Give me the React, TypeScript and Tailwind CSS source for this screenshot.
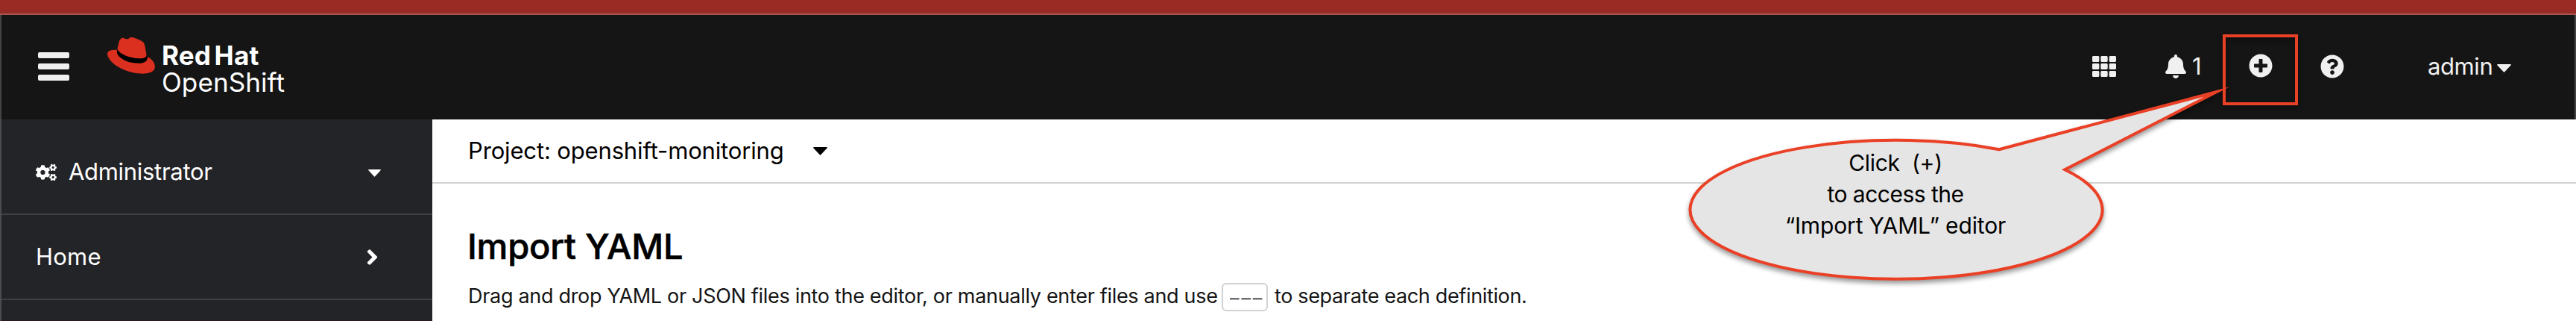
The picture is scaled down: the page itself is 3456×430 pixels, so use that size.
import { FaAngleRight, FaBell, FaCogs, FaPlusCircle, FaQuestionCircle, FaTh } from "react-icons/fa";

function Hat() {
  return (
    <svg className="block h-[49px] w-[64px]" viewBox="0 0 64 49">
      <path
        fill="#db2f20"
        d="M18.500 1.600C19.700.2 21.500.7 23.100 1.500c1.800.8 3.500 1 5 .7C29.500.6 31-.4 33.500 0c4.500 1 9 3 13.500 5.500 2.600 2 3.200 4.500 3.700 7.500l2.200 12.500c6 3 11 7.500 11 14 0 6-6.500 9.200-16.500 9.200C31 48.700 13 41 5 32 1 27.500-.7 23 .4 20.500 2 17.200 7.500 16.600 13 16.900L15.300 7.500c.6-2.500 1.700-4.500 3.200-5.900Z"
      />
      <path
        fill="#000"
        d="M14 15.500c-.9 1.200-1.400 2.600-1.200 4.300C13.500 26 24 34.500 41.500 34.800c6.500.1 11-2 12.200-5.800.5-2.100 0-4.200-1.300-5.600.6 3.200-3.200 5-9.400 4.900C29 28 17 22 14.500 17.500c-.3-.7-.4-1.300-.5-2Z"
      />
    </svg>
  );
}

function Caret({ className }: { className: string }) {
  return (
    <svg className={className} viewBox="0 0 19 11" preserveAspectRatio="none">
      <path fill="currentColor" d="M1 0h17q1.500 0 .5 1.500L10.500 10q-1 1.300-2 0L.5 1.500Q-.5 0 1 0Z" />
    </svg>
  );
}

function Masthead() {
  return (
    <header className="flex h-[140px] border-x-2 border-[#444446] bg-[#151515] text-[#f0f0f0]">
      <button className="mt-[50px] ml-[49px] flex h-[38px] w-[42px] flex-col justify-between">
        <span className="h-2 w-full rounded-[2px] bg-[#f0f0f0]" />
        <span className="h-2 w-full rounded-[2px] bg-[#f0f0f0]" />
        <span className="h-2 w-full rounded-[2px] bg-[#f0f0f0]" />
      </button>
      <div className="mt-[30px] ml-[51px] flex">
        <Hat />
        <div className="ml-[9px] pt-[6px] whitespace-nowrap text-white">
          <div className="text-[35px] leading-[36px] font-bold tracking-[0.2px] [word-spacing:-4px]">Red Hat</div>
          <div className="text-[35px] leading-[37px] tracking-[0.1px]">OpenShift</div>
        </div>
      </div>
      <div className="mr-[85px] ml-auto flex h-[137px] items-center">
        <FaTh className="mt-px mr-[66px] h-[32px] w-[32px]" />
        <FaBell className="mt-px mr-[8px] h-[32px] w-[28px]" />
        <span className="w-[76px] pt-[2px] text-[31px]">1</span>
        <FaPlusCircle className="mr-[64px] mb-px h-[32px] w-[32px]" />
        <FaQuestionCircle className="mt-px mr-[112px] h-[32px] w-[32px]" />
        <span className="w-[93px] pt-[2px] text-[31px] tracking-[-0.4px]">admin</span>
        <Caret className="mt-[6px] h-[11px] w-[19px]" />
      </div>
    </header>
  );
}

function Sidebar() {
  return (
    <nav className="flex w-[580px] shrink-0 flex-col border-l-2 border-[#4b4c4f] bg-[#232428] text-[31px] text-white">
      <div className="flex h-[128px] items-center border-b-2 border-[#3e4044] pr-[69px] pb-px pl-[46px]">
        <FaCogs className="mt-[16px] mr-[16px] h-[28px] w-[28px]" />
        <span className="mt-[16px] tracking-[-0.3px]">Administrator</span>
        <Caret className="mt-[18px] ml-auto h-[10px] w-[17px]" />
      </div>
      <div className="flex h-[114px] items-center border-b-2 border-[#3e4044] pr-[72px] pl-[46px]">
        <span className="tracking-[0.2px]">Home</span>
        <FaAngleRight className="ml-auto h-[33px] w-[17px]" />
      </div>
      <div className="flex-1 border-b border-[#2c1a20]" />
    </nav>
  );
}

function Content() {
  return (
    <main className="flex-1 bg-white">
      <div className="flex h-[86px] items-center border-b-2 border-[#d2d2d2] pl-[48px] text-[31px] text-black">
        <span className="w-[463px] tracking-[-0.15px]">Project: openshift-monitoring</span>
        <Caret className="h-[11px] w-[19px]" />
      </div>
      <h1 className="mt-[54px] pl-[47px] text-[47px] leading-[60px] font-medium tracking-[-0.2px] text-black [-webkit-text-stroke:0.6px_#000]">Import YAML</h1>
      <p className="mt-[19px] flex h-[38px] items-center pl-[48px] text-[27px] whitespace-nowrap text-[#151515]">
        <span className="w-[1011px] pb-[2px] tracking-[-0.31px]">Drag and drop YAML or JSON files into the editor, or manually enter files and use</span>
        <kbd className="mr-[9px] flex h-[38px] w-[62px] items-center justify-center rounded-[6px] border-2 border-[#d2d2d2] font-['Inter',sans-serif] text-[26px] text-[#6a6e73]">
          <span className="scale-x-[1.5] font-medium tracking-[-1.8px]">---</span>
        </kbd>
        <span className="pb-[2px] tracking-[-0.35px]">to separate each definition.</span>
      </p>
    </main>
  );
}

function Callout() {
  return (
    <div className="absolute top-0 left-[2240px] h-[430px] w-[900px] overflow-hidden">
      <svg className="absolute inset-0 h-full w-full" viewBox="2240 0 900 430">
        <g className="drop-shadow-[0_4px_3px_rgba(0,0,0,0.4)]">
          <path
            d="M2682 200.200 L2974 123 L2770.200 227.300 A276.500 93 0 1 1 2682 200.200Z"
            fill="#e5e5e5"
            stroke="#ea4026"
            strokeWidth="4"
            strokeMiterlimit="20"
          />
          <rect x="2984" y="48" width="97" height="91" fill="none" stroke="#ea4026" strokeWidth="4" />
        </g>
      </svg>
      <div className="absolute top-[197px] left-[103px] w-[400px] text-center text-[30px] leading-[42px] text-black">
        <div className="tracking-[-0.3px] whitespace-pre">Click  (+)</div>
        <div className="tracking-[-0.5px]">to access the</div>
        <div className="tracking-[-0.15px]">“Import YAML” editor</div>
      </div>
    </div>
  );
}

export default function App() {
  return (
    <div className="relative flex h-[430px] w-[3456px] flex-col overflow-hidden bg-white font-['Inter',sans-serif]">
      <div className="h-[20px] shrink-0 border-b-2 border-[#ac5650] bg-[#992a24]" />
      <Masthead />
      <div className="flex min-h-0 flex-1">
        <Sidebar />
        <Content />
      </div>
      <Callout />
    </div>
  );
}
